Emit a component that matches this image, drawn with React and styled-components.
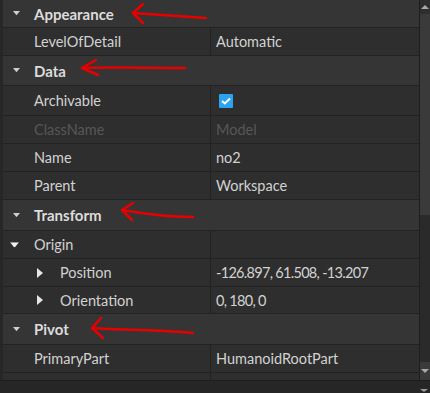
import styled, { createGlobalStyle } from 'styled-components';

const GlobalStyle = createGlobalStyle`
    html, body {
        margin: 0;
        padding: 0;
        background: #2b2b2b;
    }
    body {
        font-family: Lato, "Open Sans", sans-serif;
    }
    * {
        box-sizing: border-box;
    }
`;

const rows = [
    { kind: 'header', label: 'Appearance', h: 28 },
    { kind: 'prop', label: 'LevelOfDetail', value: 'Automatic' },
    { kind: 'header', label: 'Data', h: 30 },
    { kind: 'prop', label: 'Archivable', check: true, h: 30 },
    { kind: 'prop', label: 'ClassName', value: 'Model', disabled: true },
    { kind: 'prop', label: 'Name', value: 'no2' },
    { kind: 'prop', label: 'Parent', value: 'Workspace' },
    { kind: 'header', label: 'Transform', h: 31 },
    { kind: 'prop', label: 'Origin', group: true },
    { kind: 'prop', label: 'Position', value: '-126.897, 61.508, -13.207', child: true, numeric: true },
    { kind: 'prop', label: 'Orientation', value: '0, 180, 0', child: true, numeric: true, h: 27 },
    { kind: 'header', label: 'Pivot', h: 31 },
    { kind: 'prop', label: 'PrimaryPart', value: 'HumanoidRootPart' },
    { kind: 'prop', label: '', value: '' },
];

const arrows = [
    { shaft: 'M133 13 C 150 14, 175 16, 206 18', head: 'M143 4 L133 13 L143 23' },
    { shaft: 'M82 68 C 110 67, 150 68, 185 68', head: 'M96 60 L82 68 L98 75' },
    { shaft: 'M122 210 C 145 214, 170 217, 193 217', head: 'M133 203 L122 210 L132 220' },
    { shaft: 'M92 328 C 120 330, 160 330, 193 333', head: 'M101 318 L92 328 L103 338' },
];

const DownTri = ({ size = 7, color = '#cfcfcf' }) => (
    <svg width={size} height={size * 0.6} viewBox="0 0 10 6">
        <path d="M0 0 L10 0 L5 6 Z" fill={color} />
    </svg>
);

const RightTri = () => (
    <svg width="6" height="10" viewBox="0 0 6 10">
        <path d="M0 0 L6 5 L0 10 Z" fill="#e6e6e6" />
    </svg>
);

const Check = () => (
    <CheckBox>
        <svg width="10" height="8" viewBox="0 0 10 8">
            <path d="M1 4 L3.8 6.5 L9 1.5" stroke="#fff" strokeWidth="2" fill="none" />
        </svg>
    </CheckBox>
);

const App = () => {
    return (
        <Page>
            <GlobalStyle />
            <Main>
                <Panel>
                    {rows.map((r, i) =>
                        r.kind === 'header' ? (
                            <HeaderRow key={i} h={r.h}>
                                <Toggle><DownTri /></Toggle>
                                <HeaderLabel>{r.label}</HeaderLabel>
                            </HeaderRow>
                        ) : (
                            <PropRow key={i} h={r.h}>
                                <NameCell child={r.child}>
                                    {r.group && <GroupToggle><DownTri size={9} color="#f0f0f0" /></GroupToggle>}
                                    {r.child && <ChildToggle><RightTri /></ChildToggle>}
                                    <Label disabled={r.disabled}>{r.label}</Label>
                                </NameCell>
                                <ValueCell>
                                    {r.check ? (
                                        <Check />
                                    ) : (
                                        <Label disabled={r.disabled} numeric={r.numeric}>{r.value}</Label>
                                    )}
                                </ValueCell>
                            </PropRow>
                        )
                    )}
                    <Annotations width="418" height="380" viewBox="0 0 418 380">
                        {arrows.map((a, i) => (
                            <g key={i} stroke="#e80000" strokeWidth="2.5" fill="none" strokeLinecap="round" strokeLinejoin="round">
                                <path d={a.shaft} />
                                <path d={a.head} />
                            </g>
                        ))}
                    </Annotations>
                </Panel>
                <ScrollBar>
                    <ScrollButton><UpArrow /></ScrollButton>
                    <Thumb />
                    <Track />
                    <ScrollButton bottom><DownArrow /></ScrollButton>
                </ScrollBar>
            </Main>
            <BottomBar>
                <BottomArrow />
            </BottomBar>
        </Page>
    );
};

const Page = styled.div`
    width: 430px;
    height: 393px;
    display: flex;
    flex-direction: column;
    background: #2b2b2b;
    overflow: hidden;
`;

const Main = styled.div`
    display: flex;
    height: 380px;
`;

const Panel = styled.div`
    position: relative;
    width: 420px;
    border-left: 3px solid #272727;
    border-right: 1px solid #1e1e1e;
    overflow: hidden;
    display: flex;
    flex-direction: column;
`;

const HeaderRow = styled.div`
    flex: none;
    height: ${(p) => p.h || 30}px;
    border-bottom: 1px solid #222;
    background: #353535;
    display: flex;
    align-items: center;
`;

const Toggle = styled.div`
    width: 31px;
    padding-left: 10px;
    display: flex;
    align-items: center;
`;

const HeaderLabel = styled.span`
    font-size: 15px;
    font-weight: 700;
    color: #dcdcdc;
`;

const PropRow = styled.div`
    flex: none;
    height: ${(p) => p.h || 28}px;
    border-bottom: 1px solid #222;
    background: #2e2e2e;
    display: flex;
`;

const NameCell = styled.div`
    width: 208px;
    flex: none;
    border-right: 1px solid #222;
    display: flex;
    align-items: center;
    padding-left: ${(p) => (p.child ? 34 : 31)}px;
    position: relative;
`;

const GroupToggle = styled.div`
    position: absolute;
    left: 7px;
    top: 50%;
    transform: translateY(-50%);
    display: flex;
`;

const ChildToggle = styled.div`
    width: 23px;
    display: flex;
    align-items: center;
`;

const ValueCell = styled.div`
    flex: 1;
    display: flex;
    align-items: center;
    padding-left: 5px;
`;

const Label = styled.span`
    font-size: 14.5px;
    letter-spacing: ${(p) => (p.numeric ? '-0.7px' : '0')};
    color: ${(p) => (p.disabled ? '#575757' : '#d2d2d2')};
    white-space: nowrap;
`;

const CheckBox = styled.div`
    width: 14px;
    height: 14px;
    margin-left: 3px;
    background: #2aa3f0;
    border-radius: 1px;
    display: flex;
    align-items: center;
    justify-content: center;
`;

const Annotations = styled.svg`
    position: absolute;
    left: -3px;
    top: 0;
    pointer-events: none;
`;

const ScrollBar = styled.div`
    width: 10px;
    display: flex;
    flex-direction: column;
    background: #2b2b2b;
`;

const ScrollButton = styled.div`
    height: ${(p) => (p.bottom ? 18 : 14)}px;
    background: ${(p) => (p.bottom ? '#3a3a3a' : '#2e2e2e')};
    display: flex;
    align-items: center;
    justify-content: center;
`;

const UpArrow = styled.div`
    width: 0;
    height: 0;
    border-left: 4px solid transparent;
    border-right: 4px solid transparent;
    border-bottom: 4px solid #a8a8a8;
`;

const DownArrow = styled.div`
    width: 0;
    height: 0;
    border-left: 4px solid transparent;
    border-right: 4px solid transparent;
    border-top: 4px solid #a8a8a8;
`;

const Thumb = styled.div`
    height: 201px;
    background: #3a3a3a;
`;

const Track = styled.div`
    flex: 1;
    background: #2a2a2a;
`;

const BottomBar = styled.div`
    flex: 1;
    background: #262626;
    border-top: 1px solid #1e1e1e;
    display: flex;
    justify-content: flex-end;
    align-items: flex-end;
    padding-right: 2px;
`;

const BottomArrow = styled.div`
    width: 0;
    height: 0;
    border-left: 4px solid transparent;
    border-right: 4px solid transparent;
    border-top: 3px solid #9a9a9a;
    margin-bottom: 1px;
`;

export default App;
